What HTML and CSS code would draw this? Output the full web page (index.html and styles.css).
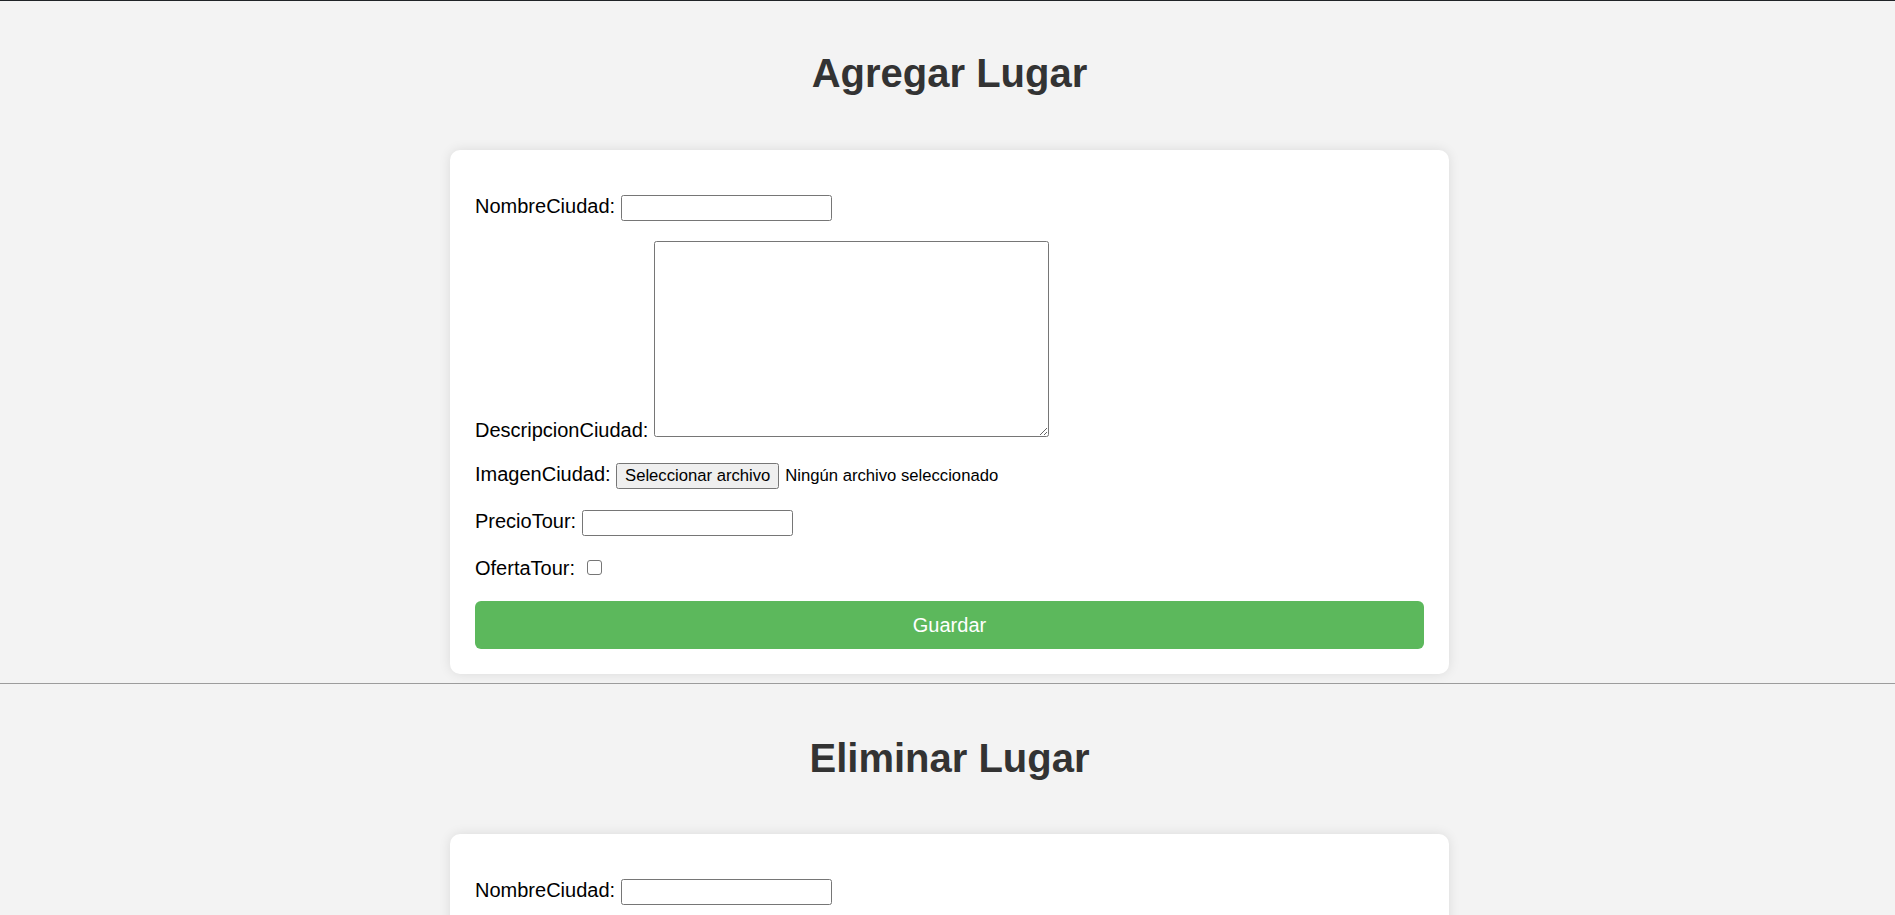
FILE: index.html
```html
<!DOCTYPE html>
<html lang="es">
<head>
<meta charset="utf-8">
<title>Lugares</title>
<link rel="stylesheet" href="styles.css">
</head>
<body>
<div class="topline"></div>
<section class="panel panel-first">
  <h1 class="title">Agregar Lugar</h1>
  <form class="card">
    <div class="row">
      <label class="lbl" for="n1">NombreCiudad:</label>
      <input class="text-input" id="n1" type="text">
    </div>
    <div class="row">
      <label class="lbl" for="d1">DescripcionCiudad:</label>
      <textarea class="area" id="d1"></textarea>
    </div>
    <div class="row row-loose">
      <label class="lbl">ImagenCiudad:</label>
      <button type="button" class="file-btn">Seleccionar archivo</button><span class="file-none">Ningún archivo seleccionado</span>
    </div>
    <div class="row row-loose">
      <label class="lbl" for="p1">PrecioTour:</label>
      <input class="text-input" id="p1" type="text">
    </div>
    <div class="row row-loose">
      <label class="lbl" for="o1">OfertaTour:</label>
      <input class="check" id="o1" type="checkbox">
    </div>
    <button type="button" class="submit">Guardar</button>
  </form>
</section>
<hr class="divider">
<section class="panel panel-second">
  <h1 class="title">Eliminar Lugar</h1>
  <form class="card">
    <div class="row">
      <label class="lbl" for="n2">NombreCiudad:</label>
      <input class="text-input" id="n2" type="text">
    </div>
    <button type="button" class="submit">Eliminar</button>
  </form>
</section>
</body>
</html>
```
FILE: styles.css
```css
html, body {
  margin: 0;
  padding: 0;
}
body {
  background: #f3f3f3;
  font-family: "Liberation Sans", Arial, sans-serif;
  font-size: 20px;
  color: #000;
}
.topline {
  height: 1px;
  background: #202327;
}
.panel {
  padding: 49px 0 9px 4px;
}
.panel-second {
  padding-top: 51px;
}
.title {
  margin: 0 0 54px;
  font-size: 40px;
  line-height: 46px;
  font-weight: bold;
  color: #333;
  text-align: center;
}
.panel-second .title {
  margin-bottom: 53px;
}
.divider {
  margin: 0;
  border: 0;
  height: 1px;
  background: #9c9c9c;
}
.card {
  box-sizing: border-box;
  width: 999px;
  margin: 0 auto;
  padding: 25px;
  background: #fff;
  border-radius: 10px;
  box-shadow: 0 0 12px rgba(0, 0, 0, 0.1);
}
.row {
  margin-top: 20px;
}
.row-loose {
  margin-top: 21px;
}
.lbl {
  font-size: 20px;
}
.text-input {
  box-sizing: border-box;
  width: 211px;
  height: 26px;
  padding: 1px 2.5px;
  border: 1px solid #767676;
  border-radius: 2.5px;
  font-family: "Liberation Sans", Arial, sans-serif;
  font-size: 16.67px;
  background: #fff;
  margin: 0;
}
.area {
  box-sizing: border-box;
  width: 395px;
  height: 196px;
  margin: 0;
  padding: 2.5px;
  border: 1px solid #767676;
  border-radius: 2.5px;
  font-family: "Liberation Mono", monospace;
  font-size: 16.67px;
  background: #fff;
}
.file-btn {
  box-sizing: border-box;
  height: 26px;
  width: 163px;
  padding: 0;
  margin: 0 6px 0 0;
  border: 1px solid #767676;
  border-radius: 2.5px;
  background: #efefef;
  color: #000;
  font-family: "Liberation Sans", Arial, sans-serif;
  font-size: 16.67px;
}
.file-none {
  font-size: 16.67px;
}
.check {
  appearance: none;
  -webkit-appearance: none;
  box-sizing: border-box;
  width: 15px;
  height: 15px;
  margin: 0 0 0 6px;
  border: 1px solid #767676;
  border-radius: 3px;
  background: #fff;
  vertical-align: baseline;
}
.submit {
  display: block;
  width: 100%;
  height: 48px;
  margin-top: 21px;
  padding: 0;
  border: 0;
  border-radius: 6px;
  background: #5cb85c;
  color: #fff;
  font-family: "Liberation Sans", Arial, sans-serif;
  font-size: 20px;
}
```
